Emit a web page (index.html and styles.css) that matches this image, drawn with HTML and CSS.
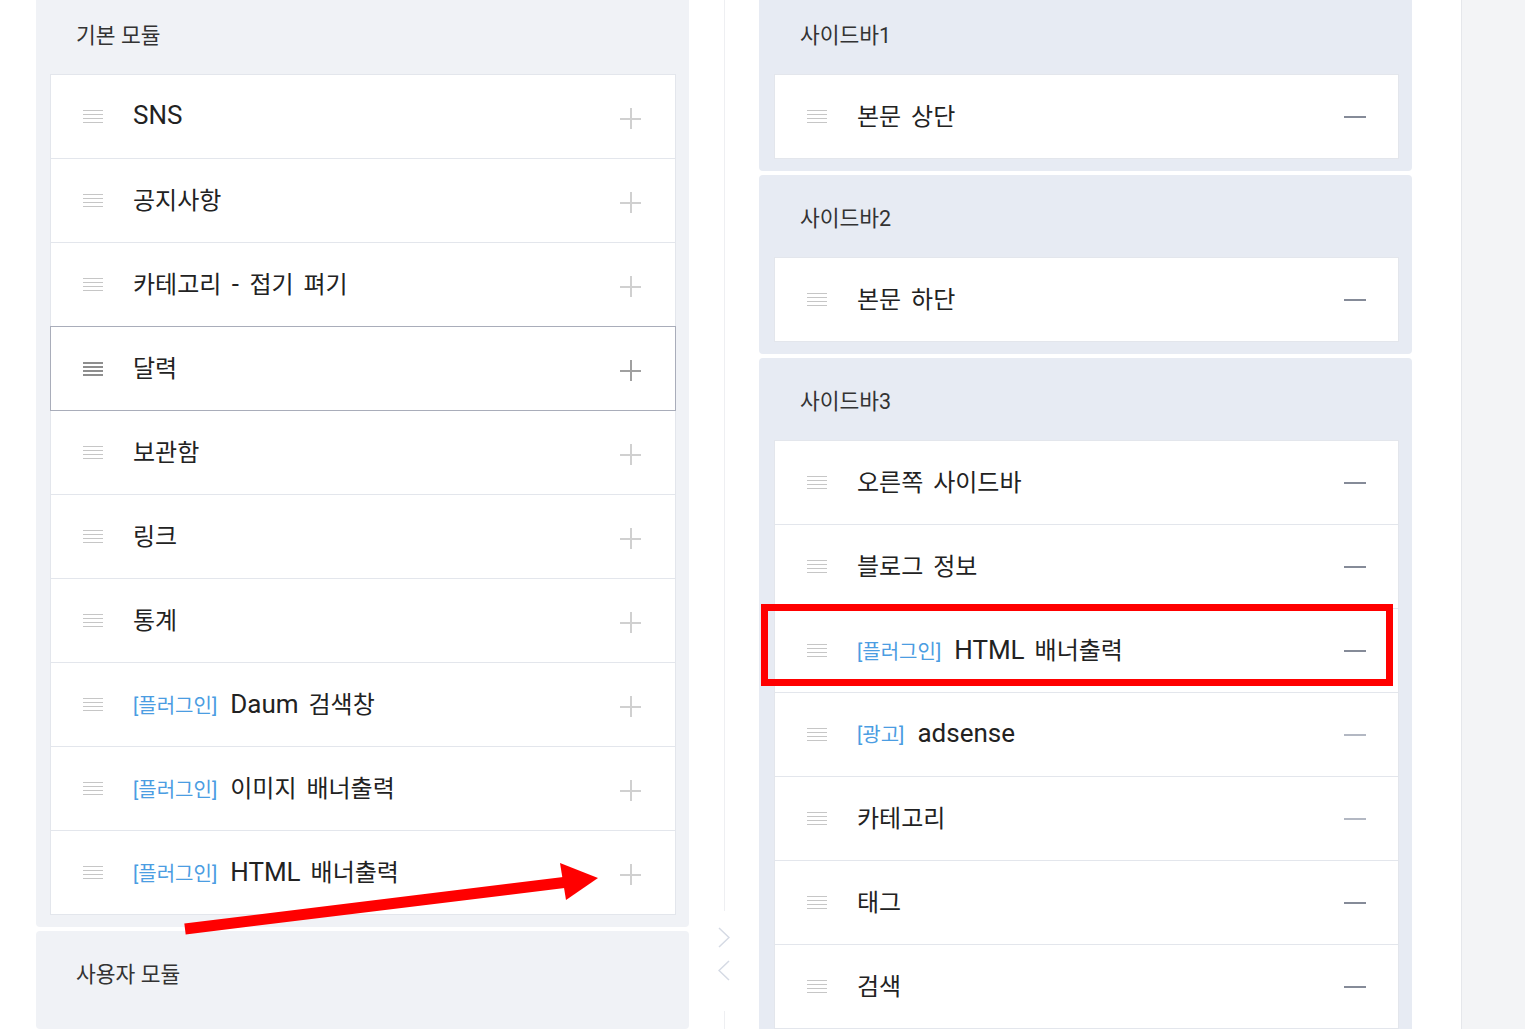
FILE: index.html
```html
<!DOCTYPE html>
<html lang="ko">
  <head>
    <meta charset="UTF-8" />
    <meta name="viewport" content="width=device-width, initial-scale=1.0" />
    <title>모듈 설정</title>
    <link rel="stylesheet" href="styles.css">
  </head>
  <body>
    <div class="page">
      <div class="column">
        <section class="panel basic">
          <h2 class="panelTitle">기본 모듈</h2>
          <ul class="modules">
            <li class="module"><span class="handle"></span><span class="name"><span class="en">SNS</span></span><span class="add"></span></li>
            <li class="module"><span class="handle"></span><span class="name">공지사항</span><span class="add"></span></li>
            <li class="module"><span class="handle"></span><span class="name">카테고리<span class="en"> - </span>접기 펴기</span><span class="add"></span></li>
            <li class="module hover"><span class="handle"></span><span class="name">달력</span><span class="add"></span></li>
            <li class="module"><span class="handle"></span><span class="name">보관함</span><span class="add"></span></li>
            <li class="module"><span class="handle"></span><span class="name">링크</span><span class="add"></span></li>
            <li class="module"><span class="handle"></span><span class="name">통계</span><span class="add"></span></li>
            <li class="module"><span class="handle"></span><span class="name"><em class="tag">[플러그인]</em><span class="en">Daum</span>&nbsp;검색창</span><span class="add"></span></li>
            <li class="module"><span class="handle"></span><span class="name"><em class="tag">[플러그인]</em>이미지 배너출력</span><span class="add"></span></li>
            <li class="module"><span class="handle"></span><span class="name"><em class="tag">[플러그인]</em><span class="en">HTML</span>&nbsp;배너출력</span><span class="add"></span></li>
          </ul>
        </section>
        <section class="panel">
          <h2 class="panelTitle">사용자 모듈</h2>
        </section>
      </div>

      <div class="divider">
        <div class="line top"></div>
        <div class="moveButtons">
          <svg width="12" height="21" viewBox="0 0 12 21"><path d="M1 1 L11 10.5 L1 20" fill="none" stroke="#d5dae4" stroke-width="1.5"/></svg>
          <svg width="12" height="21" viewBox="0 0 12 21"><path d="M11 1 L1 10.5 L11 20" fill="none" stroke="#d5dae4" stroke-width="1.5"/></svg>
        </div>
        <div class="line"></div>
      </div>

      <div class="column">
        <section class="panel sidebar">
          <h2 class="panelTitle">사이드바1</h2>
          <ul class="modules">
            <li class="module"><span class="handle"></span><span class="name">본문 상단</span><span class="remove"></span></li>
          </ul>
        </section>
        <section class="panel sidebar">
          <h2 class="panelTitle">사이드바2</h2>
          <ul class="modules">
            <li class="module"><span class="handle"></span><span class="name">본문 하단</span><span class="remove"></span></li>
          </ul>
        </section>
        <section class="panel sidebar">
          <h2 class="panelTitle">사이드바3</h2>
          <ul class="modules">
            <li class="module"><span class="handle"></span><span class="name">오른쪽 사이드바</span><span class="remove"></span></li>
            <li class="module"><span class="handle"></span><span class="name">블로그 정보</span><span class="remove"></span></li>
            <li class="module"><span class="handle"></span><span class="name"><em class="tag">[플러그인]</em><span class="en">HTML</span>&nbsp;배너출력</span><span class="remove"></span></li>
            <li class="module"><span class="handle"></span><span class="name"><em class="tag">[광고]</em><span class="en">adsense</span></span><span class="remove light"></span></li>
            <li class="module"><span class="handle"></span><span class="name">카테고리</span><span class="remove light"></span></li>
            <li class="module"><span class="handle"></span><span class="name">태그</span><span class="remove"></span></li>
            <li class="module"><span class="handle"></span><span class="name">검색</span><span class="remove"></span></li>
          </ul>
        </section>
      </div>

      <div class="gutter"></div>
      <div class="preview"></div>
    </div>

    <!-- annotations drawn over the screenshot -->
    <div class="highlight"></div>
    <svg class="arrow" width="1525" height="1029" viewBox="0 0 1525 1029">
      <line x1="185" y1="929" x2="568" y2="882" stroke="#ff0000" stroke-width="11"/>
      <polygon points="598,878 560,863 566,900" fill="#ff0000"/>
    </svg>
  </body>
</html>
```

FILE: styles.css
```css
* {
  box-sizing: border-box;
}

body {
  margin: 0;
  height: 1029px;
  overflow: hidden;
  position: relative;
  background-color: white;
  font-family: Roboto, "Noto Sans CJK KR", sans-serif;
  color: #222;
}

.page {
  display: flex;
  margin-top: -8px;
  padding-left: 36px;
  height: 1037px;
}

.column {
  width: 653px;
  display: flex;
  flex-direction: column;
  gap: 4px;
}

.panel {
  background-color: #f0f2f6;
  border-radius: 4px;
  padding: 8px 13px 12px 14px;
}
.panel.sidebar {
  background-color: #e7ebf3;
  padding-left: 15px;
}
.column .panel:last-child {
  flex: 1;
}

.panelTitle {
  margin: 0;
  height: 74px;
  display: flex;
  align-items: center;
  padding: 0 0 7px 26px;
  font-size: 21.5px;
  font-weight: normal;
  color: #333;
}

.modules {
  list-style: none;
  margin: 0;
  padding: 0;
}

.module {
  display: flex;
  align-items: center;
  height: 85px;
  margin-top: -1px;
  background-color: white;
  border: 1px solid #e3e6ec;
  position: relative;
}
.module:first-child {
  margin-top: 0;
}
.module.hover {
  border-color: #a9adba;
  z-index: 1;
}

.handle {
  width: 20px;
  height: 14px;
  margin-left: 32px;
  margin-right: 30px;
  background: repeating-linear-gradient(#c6c6c6 0 1px, transparent 1px 4px);
}
.module.hover .handle {
  background: repeating-linear-gradient(#8e8e8e 0 2px, transparent 2px 4px);
}

.name {
  font-size: 24px;
  display: flex;
  align-items: baseline;
  white-space: pre;
  word-spacing: 4px;
  padding-bottom: 4px;
}

.en {
  font-size: 26px;
}

.tag {
  font-style: normal;
  font-size: 20px;
  color: #4b9de2;
  margin-right: 13px;
}

.add {
  margin-left: auto;
  margin-right: 34px;
  width: 21px;
  height: 21px;
  position: relative;
  top: 2px;
}
.add::before,
.add::after {
  content: "";
  position: absolute;
  background-color: #d0d0d0;
}
.add::before {
  left: 0;
  right: 0;
  top: 10px;
  height: 2px;
}
.add::after {
  top: 0;
  bottom: 0;
  left: 10px;
  width: 2px;
}
.module.hover .add::before,
.module.hover .add::after {
  background-color: #a0a0a0;
}

.remove {
  margin-left: auto;
  margin-right: 32px;
  width: 22px;
  height: 2px;
  background-color: #858b98;
}
.remove.light {
  background-color: #b3b8c3;
}

.divider {
  width: 70px;
  display: flex;
  flex-direction: column;
  align-items: center;
}
.line {
  width: 1px;
  flex: 1;
  background-color: #eeeff2;
}
.line.top {
  flex: none;
  height: 919px;
}
.moveButtons {
  height: 100px;
  display: flex;
  flex-direction: column;
  align-items: center;
  gap: 12px;
  padding-top: 16px;
}

.gutter {
  width: 50px;
  border-right: 1px solid #e5e7eb;
}
.preview {
  flex: 1;
  background-color: #f3f4f6;
}

.highlight {
  position: absolute;
  left: 761px;
  top: 604px;
  width: 632px;
  height: 82px;
  border: 7px solid #ff0000;
  pointer-events: none;
}

.arrow {
  position: absolute;
  left: 0;
  top: 0;
  pointer-events: none;
}
```
